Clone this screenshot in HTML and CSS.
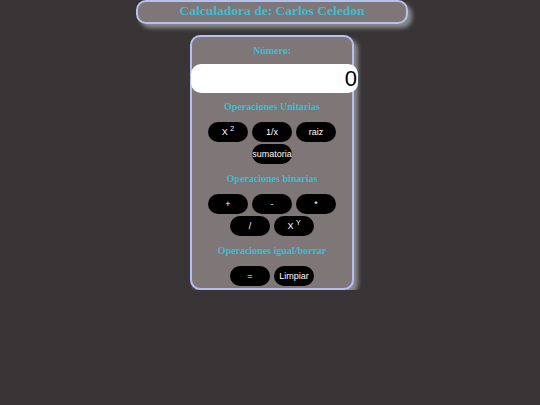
FILE: index.html
```html
<!DOCTYPE html>
<html lang="es">
<head>
<meta charset="utf-8">
<title>Calculadora</title>
<link rel="stylesheet" href="styles.css">
</head>
<body>
<div class="page">
  <div class="header">Calculadora de: Carlos Celedon</div>
  <div class="calc">
    <div class="label first">Número:</div>
    <div class="display">0</div>
    <div class="label">Operaciones Unitarias</div>
    <div class="group">
      <button class="btn">X <sup>2</sup></button>
      <button class="btn">1/x</button>
      <button class="btn">raiz</button>
      <button class="btn">sumatoria</button>
    </div>
    <div class="label after">Operaciones binarias</div>
    <div class="group">
      <button class="btn">+</button>
      <button class="btn">-</button>
      <button class="btn">*</button>
      <button class="btn">/</button>
      <button class="btn">X <sup>Y</sup></button>
    </div>
    <div class="label after">Operaciones igual/borrar</div>
    <div class="group">
      <button class="btn">=</button>
      <button class="btn">Limpiar</button>
    </div>
  </div>
</div>
</body>
</html>
```
FILE: styles.css
```css
html, body {
  margin: 0;
  padding: 0;
  background: #393536;
  font-family: "Liberation Serif", serif;
}
.page {
  display: flex;
  flex-direction: column;
  align-items: center;
  padding-left: 4px;
}
.header {
  box-sizing: border-box;
  width: 272px;
  height: 24px;
  border: 2px solid #b3c2f0;
  border-radius: 10px;
  background: #7f7777;
  box-shadow: 4px 4px 4px #8c8c8c;
  color: #3dbcd6;
  font-weight: bold;
  font-size: 13.5px;
  line-height: 17px;
  text-align: center;
}
.calc {
  box-sizing: border-box;
  margin-top: 11px;
  width: 164px;
  height: 255px;
  border: 2px solid #b3c2f0;
  border-radius: 10px;
  background: #7f7777;
  box-shadow: 4px 4px 4px #8c8c8c;
  display: flex;
  flex-direction: column;
  align-items: center;
  padding-top: 8px;
}
.label {
  color: #3dbcd6;
  font-weight: bold;
  font-size: 10px;
  line-height: 12px;
  height: 12px;
  margin-top: 8px;
  text-align: center;
  white-space: nowrap;
}
.label.first {
  margin-top: 0;
}
.label.after {
  margin-top: 9px;
}
.display {
  box-sizing: border-box;
  align-self: flex-start;
  margin-left: -1px;
  margin-top: 7px;
  width: 167px;
  height: 29px;
  background: #ffffff;
  border-radius: 10px;
  color: #000;
  font-family: "Liberation Sans", Arial, sans-serif;
  font-size: 22px;
  line-height: 29px;
  text-align: right;
  padding-right: 1px;
}
.group {
  width: 128px;
  margin-top: 9px;
  display: flex;
  flex-wrap: wrap;
  justify-content: center;
  gap: 2px 4px;
}
.btn {
  width: 40px;
  height: 20px;
  padding: 0;
  border: none;
  border-radius: 10px;
  background: #000;
  color: #fff;
  font-family: "Liberation Sans", Arial, sans-serif;
  font-size: 9px;
  line-height: 20px;
  text-align: center;
}
.btn sup {
  font-size: 7px;
  vertical-align: 4px;
  line-height: 0;
}
```
